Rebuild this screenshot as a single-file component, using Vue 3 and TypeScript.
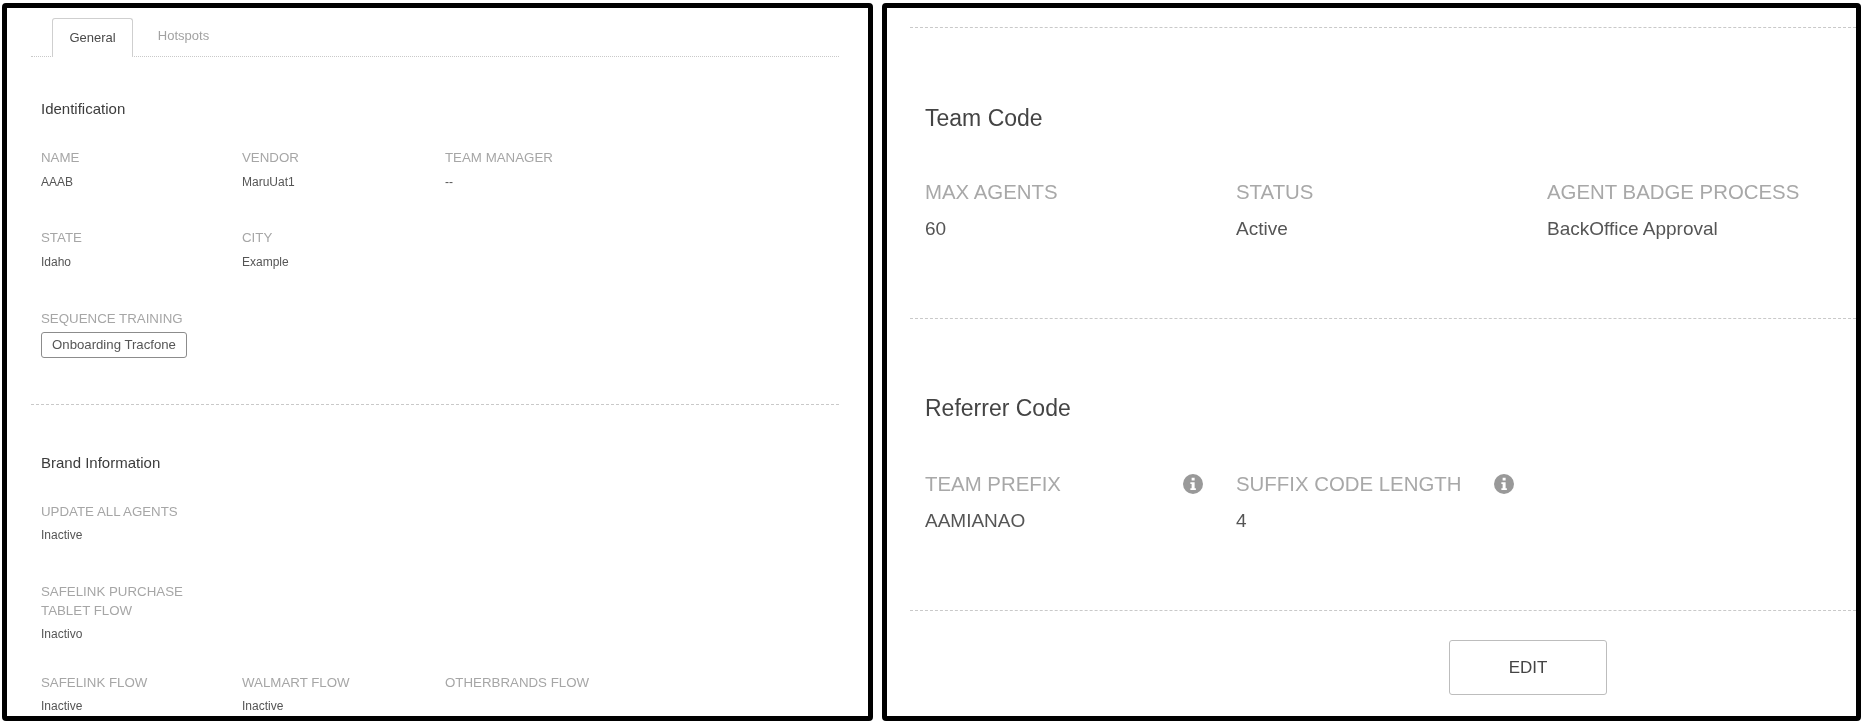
<script setup lang="ts">
interface Field {
  label: string
  value?: string
}

const identRows: Field[][] = [
  [
    { label: 'NAME', value: 'AAAB' },
    { label: 'VENDOR', value: 'MaruUat1' },
    { label: 'TEAM MANAGER', value: '--' },
  ],
  [
    { label: 'STATE', value: 'Idaho' },
    { label: 'CITY', value: 'Example' },
  ],
]

const flowRow: Field[] = [
  { label: 'SAFELINK FLOW', value: 'Inactive' },
  { label: 'WALMART FLOW', value: 'Inactive' },
  { label: 'OTHERBRANDS FLOW' },
]

const teamCode: Field[] = [
  { label: 'MAX AGENTS', value: '60' },
  { label: 'STATUS', value: 'Active' },
  { label: 'AGENT BADGE PROCESS', value: 'BackOffice Approval' },
]

const referrerCode: Field[] = [
  { label: 'TEAM PREFIX', value: 'AAMIANAO' },
  { label: 'SUFFIX CODE LENGTH', value: '4' },
]
</script>

<template>
  <div class="page">
    <section class="panel left">
      <div class="tabs">
        <span class="tab active">General</span>
        <span class="tab">Hotspots</span>
      </div>

      <div class="left-body">
        <h3 class="ident-title">Identification</h3>
        <div class="ident-rows">
          <div v-for="(row, i) in identRows" :key="i" class="row">
            <div v-for="f in row" :key="f.label" class="field">
              <div class="label">{{ f.label }}</div>
              <div class="value">{{ f.value }}</div>
            </div>
          </div>
        </div>
        <div class="label seq-label">SEQUENCE TRAINING</div>
        <span class="chip">Onboarding Tracfone</span>
      </div>

      <hr class="dash left-dash" />

      <div class="left-body">
        <h3 class="brand-title">Brand Information</h3>
        <div class="brand-rows">
          <div class="row">
            <div class="field">
              <div class="label">UPDATE ALL AGENTS</div>
              <div class="value">Inactive</div>
            </div>
          </div>
          <div class="row">
            <div class="field">
              <div class="label">SAFELINK PURCHASE<br />TABLET FLOW</div>
              <div class="value">Inactivo</div>
            </div>
          </div>
          <div class="row flow-row">
            <div v-for="f in flowRow" :key="f.label" class="field">
              <div class="label">{{ f.label }}</div>
              <div v-if="f.value" class="value">{{ f.value }}</div>
            </div>
          </div>
        </div>
      </div>
    </section>

    <section class="panel right">
      <hr class="dash right-top" />

      <div class="block team">
        <h2>Team Code</h2>
        <div class="big-row">
          <div v-for="f in teamCode" :key="f.label">
            <div class="big-label">{{ f.label }}</div>
            <div class="big-value">{{ f.value }}</div>
          </div>
        </div>
      </div>

      <hr class="dash" />

      <div class="block referrer">
        <h2>Referrer Code</h2>
        <div class="big-row">
          <div v-for="f in referrerCode" :key="f.label">
            <div class="big-label with-icon">
              {{ f.label }}
              <svg class="info" viewBox="0 0 16 16" width="20" height="20" aria-hidden="true">
                <circle cx="8" cy="8" r="8" fill="#999" />
                <rect x="6.9" y="3" width="2.4" height="2.2" fill="#fff" />
                <path d="M5.9 6.6h3.4v4.8h1v1.3H5.9v-1.3h1V7.9h-1z" fill="#fff" />
              </svg>
            </div>
            <div class="big-value">{{ f.value }}</div>
          </div>
        </div>
      </div>

      <hr class="dash foot-dash" />

      <div class="actions">
        <button class="edit">EDIT</button>
      </div>
    </section>
  </div>
</template>

<style>
html,
body {
  margin: 0;
  background: #fff;
}
</style>

<style scoped>
.page {
  display: flex;
  gap: 9px;
  width: 1861px;
  height: 723px;
  padding: 3px 0 2px 2px;
  box-sizing: border-box;
  overflow: hidden;
  font-family: 'Liberation Sans', Arial, sans-serif;
  filter: blur(0.45px);
}

.panel {
  border: 5px solid #000;
  border-radius: 4px;
  background: #fff;
  overflow: hidden;
  box-sizing: border-box;
}

.left {
  width: 871px;
  padding: 10px 29px 0 24px;
}

.right {
  flex: 1;
  padding: 0 0 0 23px;
}

.dash {
  border: 0;
  border-top: 1px dashed #c9c9c9;
  margin: 0;
}

/* tabs */
.tabs {
  display: flex;
  height: 39px;
  box-sizing: border-box;
  padding-left: 21px;
  border-bottom: 1px dotted #c9c9c9;
}

.tab {
  width: 81px;
  box-sizing: border-box;
  text-align: center;
  font-size: 13px;
  line-height: 36px;
  color: #a2a2a2;
  margin-right: 10px;
}

.tab.active {
  height: 39px;
  line-height: 38px;
  color: #4a4a4a;
  background: #fff;
  border: 1px solid #cfcfcf;
  border-bottom: 0;
  border-radius: 3px 3px 0 0;
  margin-right: 10px;
}

.left-body {
  padding-left: 10px;
}

h3 {
  margin: 0;
  font-size: 15px;
  line-height: 18px;
  font-weight: 400;
  color: #3c3c3c;
}

.ident-title {
  padding-top: 43px;
}

.ident-rows {
  display: grid;
  row-gap: 36px;
  margin-top: 30px;
}

.ident-rows .value {
  margin-top: 6px;
}

.brand-rows {
  display: grid;
  row-gap: 37px;
  margin-top: 30px;
}

.flow-row {
  margin-top: -8px;
}

.row {
  display: grid;
  grid-template-columns: 201px 203px 1fr;
}

.label {
  font-size: 13.3px;
  line-height: 19px;
  color: #a6a6a6;
}

.value {
  margin-top: 5px;
  font-size: 12px;
  line-height: 19px;
  color: #555;
}

.seq-label {
  margin-top: 37px;
}

.chip {
  display: inline-block;
  width: 146px;
  height: 26px;
  margin-top: 4px;
  box-sizing: border-box;
  border: 1px solid #8c8c8c;
  border-radius: 3px;
  text-align: center;
  font-size: 13.2px;
  line-height: 24px;
  color: #555;
}

.left-dash {
  margin-top: 46px;
}

.brand-title {
  padding-top: 49px;
}

/* right panel */
.right-top {
  margin-top: 19px;
}

.block h2 {
  margin: 0;
  font-size: 23px;
  line-height: 26px;
  font-weight: 400;
  color: #444;
}

.big-row {
  display: grid;
  grid-template-columns: repeat(3, 311px);
  margin-top: 50px;
}

.referrer .big-row {
  margin-top: 52px;
}

.big-label {
  font-size: 20.4px;
  line-height: 22px;
  color: #a8a8a8;
}

.with-icon {
  display: flex;
  justify-content: space-between;
  align-items: center;
  width: 278px;
}

.big-value {
  margin-top: 15px;
  font-size: 19px;
  line-height: 22px;
  color: #555;
}

.block {
  padding-left: 15px;
}

.team {
  height: 290px;
  box-sizing: border-box;
  padding-top: 77px;
}

.referrer {
  height: 291px;
  box-sizing: border-box;
  padding-top: 76px;
}

.actions {
  display: flex;
  justify-content: flex-start;
  padding-top: 29px;
  padding-left: 539px;
}

.edit {
  width: 158px;
  height: 55px;
  background: #fff;
  border: 1px solid #bdbdbd;
  border-radius: 3px;
  font-family: inherit;
  font-size: 17px;
  color: #444;
}
</style>
